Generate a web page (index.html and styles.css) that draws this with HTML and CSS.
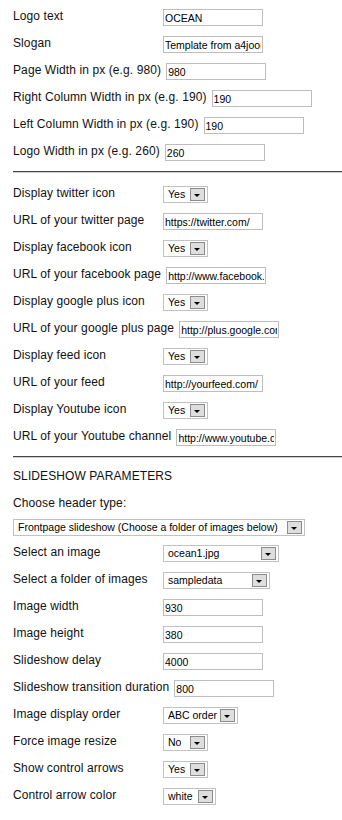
FILE: index.html
```html
<!DOCTYPE html>
<html lang="en">
<head>
  <meta charset="UTF-8">
  <meta name="viewport" content="width=device-width, initial-scale=1.0">
  <title>Template Parameters</title>
  <link rel="stylesheet" href="styles.css">
</head>
<body>
  <form class="params">
    <div class="row"><label for="logo-text">Logo text</label><input id="logo-text" type="text" value="OCEAN"></div>
    <div class="row"><label for="slogan">Slogan</label><input id="slogan" type="text" value="Template from a4joomla"></div>
    <div class="row"><label for="page-width">Page Width in px (e.g. 980)</label><input id="page-width" type="text" value="980"></div>
    <div class="row"><label for="right-col">Right Column Width in px (e.g. 190)</label><input id="right-col" type="text" value="190"></div>
    <div class="row"><label for="left-col">Left Column Width in px (e.g. 190)</label><input id="left-col" type="text" value="190"></div>
    <div class="row"><label for="logo-width">Logo Width in px (e.g. 260)</label><input id="logo-width" type="text" value="260"></div>

    <hr class="sep first">

    <div class="row">
      <label for="tw-icon">Display twitter icon</label>
      <span class="select w-yes"><select id="tw-icon"><option>Yes</option><option>No</option></select><span class="arrow"></span></span>
    </div>
    <div class="row"><label for="tw-url">URL of your twitter page</label><input id="tw-url" type="text" value="https://twitter.com/"></div>
    <div class="row">
      <label for="fb-icon">Display facebook icon</label>
      <span class="select w-yes"><select id="fb-icon"><option>Yes</option><option>No</option></select><span class="arrow"></span></span>
    </div>
    <div class="row"><label for="fb-url">URL of your facebook page</label><input id="fb-url" type="text" value="http://www.facebook.com/"></div>
    <div class="row">
      <label for="gp-icon">Display google plus icon</label>
      <span class="select w-yes"><select id="gp-icon"><option>Yes</option><option>No</option></select><span class="arrow"></span></span>
    </div>
    <div class="row"><label for="gp-url">URL of your google plus page</label><input id="gp-url" type="text" value="http://plus.google.com/"></div>
    <div class="row">
      <label for="feed-icon">Display feed icon</label>
      <span class="select w-yes"><select id="feed-icon"><option>Yes</option><option>No</option></select><span class="arrow"></span></span>
    </div>
    <div class="row"><label for="feed-url">URL of your feed</label><input id="feed-url" type="text" value="http://yourfeed.com/"></div>
    <div class="row">
      <label for="yt-icon">Display Youtube icon</label>
      <span class="select w-yes"><select id="yt-icon"><option>Yes</option><option>No</option></select><span class="arrow"></span></span>
    </div>
    <div class="row"><label for="yt-url">URL of your Youtube channel</label><input id="yt-url" type="text" value="http://www.youtube.com/"></div>

    <hr class="sep">

    <div class="row title">SLIDESHOW PARAMETERS</div>
    <div class="row text-only"><label for="header-type">Choose header type:</label></div>
    <div class="row wide">
      <span class="select w-header"><select id="header-type"><option>Frontpage slideshow (Choose a folder of images below)</option><option>Single image</option></select><span class="arrow"></span></span>
    </div>
    <div class="row">
      <label for="image">Select an image</label>
      <span class="select w-image"><select id="image"><option>ocean1.jpg</option></select><span class="arrow"></span></span>
    </div>
    <div class="row">
      <label for="folder">Select a folder of images</label>
      <span class="select w-folder"><select id="folder"><option>sampledata</option></select><span class="arrow"></span></span>
    </div>
    <div class="row"><label for="img-width">Image width</label><input id="img-width" type="text" value="930"></div>
    <div class="row"><label for="img-height">Image height</label><input id="img-height" type="text" value="380"></div>
    <div class="row"><label for="delay">Slideshow delay</label><input id="delay" type="text" value="4000"></div>
    <div class="row"><label for="transition">Slideshow transition duration</label><input id="transition" type="text" value="800"></div>
    <div class="row">
      <label for="order">Image display order</label>
      <span class="select w-order"><select id="order"><option>ABC order</option><option>Random</option></select><span class="arrow"></span></span>
    </div>
    <div class="row">
      <label for="resize">Force image resize</label>
      <span class="select w-yes"><select id="resize"><option>No</option><option>Yes</option></select><span class="arrow"></span></span>
    </div>
    <div class="row">
      <label for="arrows">Show control arrows</label>
      <span class="select w-yes"><select id="arrows"><option>Yes</option><option>No</option></select><span class="arrow"></span></span>
    </div>
    <div class="row">
      <label for="arrow-color">Control arrow color</label>
      <span class="select w-color"><select id="arrow-color"><option>white</option><option>black</option></select><span class="arrow"></span></span>
    </div>
  </form>
</body>
</html>
```

FILE: styles.css
```css
body {
  margin: 0;
  padding: 9px 0 0 13px;
  font-family: 'Liberation Sans', Arial, sans-serif;
  font-size: 12px;
  color: #111;
  background: #fff;
  overflow: hidden;
}
.row {
  display: flex;
  align-items: flex-start;
  height: 18px;
  margin-bottom: 9px;
}
.row label, .title {
  display: block;
  min-width: 145px;
  padding-right: 5px;
  line-height: 14px;
  letter-spacing: 0.1px;
  white-space: nowrap;
}
.text-only { height: 14px; }
.wide { height: 17px; }
input[type="text"] {
  box-sizing: border-box;
  width: 100px;
  height: 17px;
  margin: 0;
  padding: 0 1px;
  border: 1px solid #bdbdbd;
  font-family: 'Liberation Sans', Arial, sans-serif;
  font-size: 10.5px;
  color: #000;
  background: #fff;
  outline: none;
}
hr.sep {
  height: 0;
  margin: 0 0 11px;
  border: none;
  border-top: 1px solid #444;
  border-bottom: 1px solid #cfcfcf;
}
hr.first { margin-bottom: 13px; }
.select {
  position: relative;
  display: block;
  box-sizing: border-box;
  height: 17px;
  border: 1px solid #c2c2c2;
  background: #fff;
}
.select select {
  appearance: none;
  -webkit-appearance: none;
  display: block;
  width: 100%;
  height: 15px;
  margin: 0;
  padding: 0 0 0 4px;
  border: none;
  background: transparent;
  font-family: 'Liberation Sans', Arial, sans-serif;
  font-size: 10.5px;
  line-height: 15px;
  color: #000;
  outline: none;
}
.select .arrow {
  position: absolute;
  top: 1px;
  right: 2px;
  box-sizing: border-box;
  width: 15px;
  height: 13px;
  border: 1px solid #8c8c8c;
  background: #dedede;
  pointer-events: none;
}
.select .arrow::after {
  content: "";
  position: absolute;
  left: 3px;
  top: 5px;
  border-left: 3.5px solid transparent;
  border-right: 3.5px solid transparent;
  border-top: 3px solid #000;
}
.w-yes { width: 45px; }
.w-color { width: 53px; }
.w-order { width: 75px; }
.w-image { width: 116px; }
.w-folder { width: 107px; }
.w-header { width: 292px; }
```
